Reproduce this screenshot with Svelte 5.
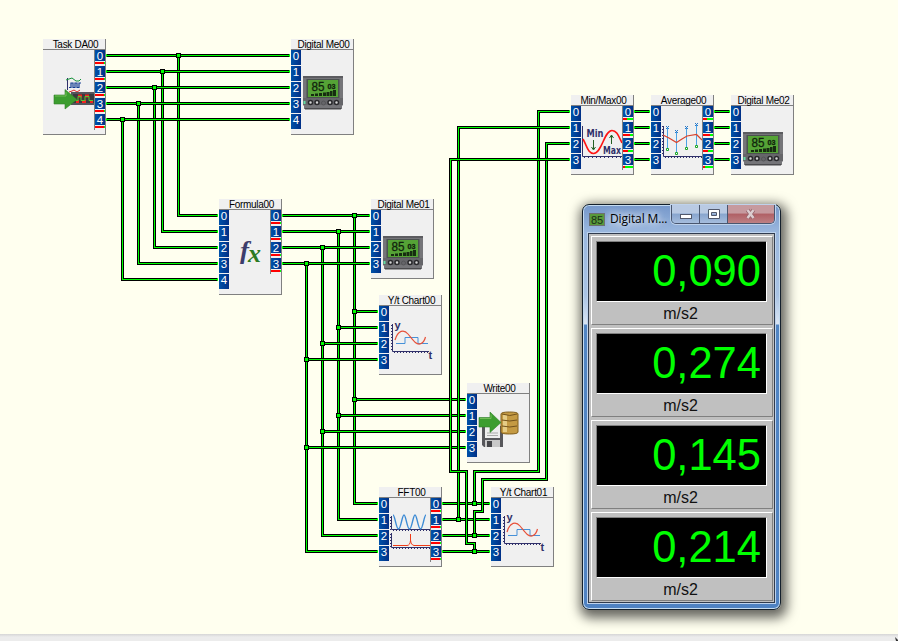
<script>
  const nodes = [
    { name: 'Task DA00', x: 43, y: 39, inputs: 0, outputs: 5, icon: 'task' },
    { name: 'Digital Me00', x: 291, y: 39, inputs: 5, outputs: 0, icon: 'meter' },
    { name: 'Formula00', x: 219, y: 199, inputs: 5, outputs: 4, icon: 'fx' },
    { name: 'Digital Me01', x: 371, y: 199, inputs: 4, outputs: 0, icon: 'meter' },
    { name: 'Y/t Chart00', x: 379, y: 295, inputs: 4, outputs: 0, icon: 'chart' },
    { name: 'Write00', x: 467, y: 383, inputs: 4, outputs: 0, icon: 'write' },
    { name: 'FFT00', x: 379, y: 487, inputs: 4, outputs: 4, icon: 'fft' },
    { name: 'Y/t Chart01', x: 491, y: 487, inputs: 4, outputs: 0, icon: 'chart' },
    { name: 'Min/Max00', x: 571, y: 95, inputs: 4, outputs: 4, icon: 'minmax', fill: [4, 7, 5, 2] },
    { name: 'Average00', x: 651, y: 95, inputs: 4, outputs: 4, icon: 'average', fill: [4, 7, 5, 2] },
    { name: 'Digital Me02', x: 731, y: 95, inputs: 4, outputs: 0, icon: 'meter' }
  ];

  const rows = (n) => Array.from({ length: n }, (_, i) => i);
  const wires = [];
  const joints = [];

  // Task outputs run to the first meter and branch down to the formula block
  [178.5, 162.5, 154.5, 138.5, 122.5].forEach((x, i) => {
    const y = 55.5 + 16 * i;
    wires.push(`M106 ${y}H290`, `M${x} ${y}V${215.5 + 16 * i}H218`);
    joints.push([x, y]);
  });

  // Formula outputs feed the meter, the chart, the writer and the FFT
  [354.5, 338.5, 322.5, 306.5].forEach((x, i) => {
    const d = 16 * i;
    wires.push(`M282 ${215.5 + d}H370`, `M${x} ${215.5 + d}V${503.5 + d}H378`);
    wires.push(`M${x} ${311.5 + d}H378`, `M${x} ${399.5 + d}H466`);
    joints.push([x, 215.5 + d], [x, 311.5 + d], [x, 399.5 + d]);
    wires.push(`M442 ${503.5 + d}H490`, `M634 ${111.5 + d}H650`, `M714 ${111.5 + d}H730`);
  });

  wires.push(
    'M474.5 503.5V471.5H538.5V111.5H570',
    'M458.5 519.5V127.5H570',
    'M474.5 535.5V511.5H482.5V479.5H546.5V143.5H570',
    'M474.5 551.5V543.5H466.5V471.5H450.5V159.5H570'
  );
  joints.push([474.5, 503.5], [458.5, 519.5], [474.5, 535.5], [474.5, 551.5]);

  // Green contact where a wire touches a port
  const tips = nodes.flatMap((n) => [
    ...rows(n.inputs).map((i) => [n.x - 2, n.y + 15 + 16 * i]),
    ...rows(n.outputs).map((i) => [n.x + 63, n.y + 15 + 16 * i])
  ]);

  const readings = ['0,090', '0,274', '0,145', '0,214'];
</script>

{#snippet picture(kind)}
  {#if kind === 'task'}
    <svg class="icon" viewBox="0 0 63 85">
      <path d="M24.500 28V40" stroke="#30306a" />
      <path d="M23 30l3-1 3-1 4 3 3 0 2-2" fill="none" stroke="#15913a" />
      <path d="M26 37.500h2v-4.500h2v4.500h2v-4.500h2v4.500h2v-4.500h2" fill="none" stroke="#123c91" stroke-width="1.200" />
      <path d="M26 42l3-1 2-1 3 2 3-2" fill="none" stroke="#e22a2a" />
      <rect x="28" y="42" width="23" height="13" fill="#55555c" />
      <rect x="30" y="44" width="21" height="9" fill="#3a3a40" />
      <path d="M33 51.500h3M39 51.500h4M47 51.500h3M35 46h4M42 46h4" fill="none" stroke="#f22420" stroke-width="3" />
      <path d="M31 50.500h4v-4h3v4h4v-4h4v4h4" fill="none" stroke="#58c431" />
      <path d="M11 45h11v-5.500l12 10-12 9.500v-5H11z" fill="#3c9d2f" stroke="#318228" stroke-width=".6" />
      <path d="M12 46h11v-4" fill="none" stroke="#72bd57" />
    </svg>
  {:else if kind === 'meter'}
    <svg class="icon" viewBox="0 0 63 85">
      <path d="M12 26h40v29l-1 1v3H13v-3l-1-1z" fill="#757579" />
      <path d="M12 26h40v2H12z" fill="#5c5c60" />
      <path d="M15.500 29h33v19h-33z" fill="#4c5250" />
      <rect x="17" y="30" width="30" height="17" fill="#55a336" />
      <text x="20.500" y="40.500" class="lcd" textLength="13" lengthAdjust="spacingAndGlyphs">85</text>
      <text x="36.500" y="38.500" class="lcd small" textLength="8" lengthAdjust="spacingAndGlyphs">03</text>
      <path d="M20 44h3v2h-3zM24 43.500h3V46h-3zM28 43h3v3h-3zM32 42.500h3V46h-3zM35.500 42h3v4h-3zM39 41h2.500v5H39zM42 40h3v6h-3z" fill="#162c10" />
      <path d="M12 48h40v7H12z" fill="#66666a" />
      <path d="M12.500 51h2v3h-2z" fill="#65dba5" />
      <g fill="#d5d5d5" stroke="#29292c" stroke-width="1.500">
        <circle cx="19.500" cy="52.500" r="2" /><circle cx="26" cy="52.500" r="2" />
        <circle cx="39" cy="52.500" r="2" /><circle cx="45.500" cy="52.500" r="2" />
      </g>
      <circle cx="32.500" cy="53" r="2" fill="none" stroke="#555558" />
      <path d="M14 58h36v1.500H14z" fill="#4a4a4d" />
    </svg>
  {:else if kind === 'fx'}
    <svg class="icon" viewBox="0 0 63 85">
      <text x="21" y="49" class="f" textLength="9" lengthAdjust="spacingAndGlyphs">f</text>
      <text x="29" y="51.500" class="x" textLength="13" lengthAdjust="spacingAndGlyphs">x</text>
    </svg>
  {:else if kind === 'chart'}
    <svg class="icon" viewBox="0 0 63 85">
      <path d="M13.500 18V45.500H50" fill="none" stroke="#30306a" />
      <path d="M12.500 19V45M15 46.500H50" fill="none" stroke="#30306a" stroke-dasharray="1 2" />
      <path d="M17 37.500h9v-6h13v6h10" fill="none" stroke="#4691d8" />
      <path d="M16 34C19 24 25 23 29 28C34 34 37 39 41 38Q45 37 46.500 31" fill="none" stroke="#e7523b" stroke-width="1.200" />
      <text x="15.500" y="22.500" class="axis">y</text>
      <text x="49.500" y="52.500" class="axis">t</text>
    </svg>
  {:else if kind === 'write'}
    <svg class="icon" viewBox="0 0 63 85">
      <path d="M15 32h21v21H17l-2-2z" fill="#57575b" />
      <path d="M18 32h15v12H18z" fill="#eeeeee" />
      <path d="M20 39h11M20 41.500h11" stroke="#aaaaaa" />
      <path d="M18 46h15v7H18z" fill="#c9c9c9" /><path d="M20 47h5v6h-5z" fill="#47474b" />
      <path d="M34 20q0-2 8.500-2t8.500 2v18q0 2-8.500 2t-8.500-2z" fill="#c49a43" stroke="#805e1c" />
      <path d="M37 21v17M39 21v17" stroke="#f0dd9c" stroke-width="1.500" />
      <path d="M35 20q8 3 15 0M35 26q8 2 15 0M35 32q8 2 15 0" fill="none" stroke="#73521c" />
      <path d="M12 23.500h11V18l11 10.500-11 10v-5.500H12z" fill="#3c9d2f" stroke="#318228" stroke-width=".6" />
      <path d="M13 24.500h11v-4" fill="none" stroke="#72bd57" />
    </svg>
  {:else if kind === 'fft'}
    <svg class="icon" viewBox="0 0 63 85">
      <path d="M12.500 18V31.500H52M12.500 35V49.500H52" fill="none" stroke="#30306a" />
      <path d="M11.500 19V32M14 32.500H52M11.500 36V50M14 50.500H52" fill="none" stroke="#30306a" stroke-dasharray="1 2" />
      <path d="M14 17C16 17 17 31 19.500 31S23 17 25 17 28 31 30.500 31 34 17 36 17 39 31 41.500 31 45 17 47 17" fill="none" stroke="#3c8bd5" stroke-width="1.400" />
      <path d="M14 47.500h14q3 0 3.500-5V36v6q.5 5 3.500 5.500h16" fill="none" stroke="#ef3b18" />
    </svg>
  {:else if kind === 'minmax'}
    <svg class="icon" viewBox="0 0 63 85">
      <path d="M11.500 20V50.500H51" fill="none" stroke="#30306a" />
      <path d="M13 51.500H51" stroke="#30306a" stroke-dasharray="1 3" />
      <path d="M12 33C16 40 17 47.500 22.500 47.500C31 47.500 33 24.500 41 24.500C46 24.500 48 31 51 37" fill="none" stroke="#ff1515" stroke-width="1.600" />
      <path d="M22.500 34v9M20.500 41l2 3 2-3M40.500 38v-9M38.500 32l2-3 2 3" fill="none" stroke="#246024" />
      <text x="15.500" y="31" class="mm" textLength="17" lengthAdjust="spacingAndGlyphs">Min</text>
      <text x="32" y="48" class="mm" textLength="18" lengthAdjust="spacingAndGlyphs">Max</text>
    </svg>
  {:else if kind === 'average'}
    <svg class="icon" viewBox="0 0 63 85">
      <path d="M12.500 20V50.500H51" fill="none" stroke="#30306a" />
      <path d="M11.500 20V50M14 51.500H51" stroke="#30306a" stroke-dasharray="1 2" />
      <path d="M16.500 22V42M25.500 26V46M35.500 22V41M45.500 19V39" stroke="#4ba2e5" />
      <path d="M15 20l3 3m0-3l-3 3M24 24l3 3m0-3l-3 3M34 20l3 3m0-3l-3 3M44 17l3 3m0-3l-3 3" stroke="#2878c9" />
      <path d="M12 29l6 3 7.500 4.500L31 33l5-3 9.500-1.500L51 34" fill="none" stroke="#d8432d" stroke-width="1.200" />
      <path d="M15.500 42.500h2v2h-2zM24.500 46.500h2v2h-2zM34.500 41.500h2v2h-2zM44.500 39.500h2v2h-2z" fill="#fff" stroke="#1ca629" />
    </svg>
  {/if}
{/snippet}

<main>
  <svg class="wires" viewBox="0 0 898 641">
    {#each wires as d}
      <path {d} class="casing" /><path {d} class="core" />
    {/each}
    {#each joints as [x, y]}
      <rect class="joint" x={x - 2} y={y - 2} width="4" height="4" />
    {/each}
    {#each tips as [x, y]}
      <rect class="tip" {x} {y} width="1" height="3" />
    {/each}
  </svg>

  {#each nodes as node}
    <section class="node" class:tall={node.inputs === 5 || node.outputs === 5} style:left="{node.x}px" style:top="{node.y}px">
      <header><span>{node.name}</span></header>
      <div class="body">
        {@render picture(node.icon)}
        <div class="ports">
          {#each rows(node.inputs) as n}<b class="port">{n}</b>{/each}
        </div>
        {#if node.outputs}
          <div class="ports out">
            {#each rows(node.outputs) as n}
              <b class="port">{n}</b><i class="level"><em style:width="{node.fill ? node.fill[n] : 9}px"></em></i>
            {/each}
          </div>
        {/if}
      </div>
    </section>
  {/each}

  <section class="window">
    <div class="titlebar">
      <span class="badge">85</span>
      <span class="title">Digital M...</span>
      <div class="controls">
        <span class="ctl"><svg width="14" height="12"><rect x="1.500" y="6.500" width="11" height="4" fill="#fff" stroke="#51586b" /></svg></span>
        <span class="ctl"><svg width="14" height="12"><path d="M1.500 1.500h11v9h-11zM4.500 4.500h5v3h-5z" fill="#fff" fill-rule="evenodd" stroke="#51586b" /></svg></span>
        <span class="ctl close"><svg width="12" height="12"><path d="M2.500 2l6 8M8.500 2l-6 8" stroke="#96656c" stroke-width="4" /><path d="M2.500 2l6 8M8.500 2l-6 8" stroke="#dccdd0" stroke-width="2.400" /></svg></span>
      </div>
    </div>
    <div class="client">
      {#each readings as value}
        <div class="panel">
          <div class="display">{value}</div>
          <div class="unit">m/s2</div>
        </div>
      {/each}
    </div>
  </section>

  <footer><svg width="4" height="5"><path d="M1 1l3 3v1H2z" fill="#333" /></svg></footer>
</main>

<style>
  :global(body) { margin: 0; }
  main { position: relative; width: 898px; height: 641px; overflow: hidden; background: #ffffef; font-family: "Liberation Sans", Arial, sans-serif; display: flex; align-items: flex-end; }
  .wires { position: absolute; inset: 0; width: 898px; height: 641px; shape-rendering: crispEdges; }
  .casing { fill: none; stroke: #000; stroke-width: 3; }
  .core { fill: none; stroke: #00ff00; stroke-width: 1; }
  .joint { fill: #00ff00; stroke: #000; stroke-width: 1; }
  .tip { fill: #00ff00; }

  .node { position: absolute; box-sizing: border-box; width: 63px; height: 80px; background: #f0f0f0; border-right: 1px solid #808080; border-bottom: 1px solid #808080; display: flex; flex-direction: column; }
  .node.tall { height: 96px; }
  header { flex: none; height: 10px; border-bottom: 1px solid #808080; display: flex; justify-content: center; font-size: 10px; line-height: 12px; letter-spacing: -0.3px; color: #000; white-space: nowrap; padding-left: 3px; }
  .body { position: relative; flex: 1; display: flex; justify-content: space-between; }
  .icon { position: absolute; left: 0; top: 0; width: 63px; height: 85px; overflow: visible; }
  .ports { position: relative; display: flex; flex-direction: column; }
  .port { width: 10px; height: 15px; margin-bottom: 1px; background: linear-gradient(90deg, #0052a9, #002f86); color: #fff; font-size: 11.500px; line-height: 13px; font-weight: 400; text-align: center; }
  .out { border-left: 1px solid #808080; background: #f0f0f0; height: fit-content; }
  .out .port { height: 11px; line-height: 13px; margin: 0; }
  .level { height: 2px; width: 10px; margin: 1px 0 2px; background: #00ff00; }
  .level em { display: block; height: 2px; background: #f00; }

  .lcd { font: 400 12px "Liberation Sans", sans-serif; fill: #10240c; stroke: #10240c; stroke-width: 0.3px; }
  .lcd.small { font-size: 8px; font-weight: 700; }
  .f { font: italic 700 25px "Liberation Serif", serif; fill: #3d3d6b; }
  .x { font: italic 700 25px "Liberation Serif", serif; fill: #2d7a22; }
  .axis { font: 700 11px "Liberation Sans", sans-serif; fill: #30306a; }
  .mm { font: 700 10px "DejaVu Sans", sans-serif; fill: #30306a; }

  .window { position: absolute; left: 582px; top: 204px; width: 199px; height: 406px; box-sizing: border-box; border: 1px solid #14202c; border-radius: 7px; background: linear-gradient(#7597ca 0, #9ab7de 27px, #a9c3e4 90px, #dae5f3 119px, #5185c3 120px, #4f82c2 100%); box-shadow: inset 0 0 0 1px #c4dbf0, 2px 4px 12px 4px rgba(0, 0, 0, 0.6); padding: 0 5px 6px; display: flex; flex-direction: column; }
  .titlebar { height: 28px; display: flex; align-items: flex-start; }
  .badge { margin: 8px 0 0 1px; width: 14px; height: 11px; border: 1px solid #6b6e70; background: #58993a; color: #182e16; font-size: 11px; line-height: 12px; text-align: center; }
  .title { margin: 6px 0 0 5px; font: 12px/16px "Open Sans", "Noto Sans", sans-serif; letter-spacing: -0.1px; color: #000; white-space: nowrap; text-shadow: 0 0 7px #fff, 0 0 10px #fff; width: 61px; }
  .controls { display: flex; height: 18px; border: 1px solid #49566f; border-top: 0; border-radius: 0 0 5px 5px; overflow: hidden; box-shadow: 0 0 0 1px #bfd2eb; }
  .ctl { width: 27px; display: flex; align-items: center; justify-content: center; background: linear-gradient(#b9cae3 45%, #88a5ce 50%, #a6bddd); border-right: 1px solid #49566f; }
  .close { width: 46px; border: 0; background: linear-gradient(#c69a9f 45%, #b06065 50%, #bd8084); }
  .client { flex: 1; box-sizing: border-box; border: 1px solid #303b4d; box-shadow: 0 0 0 1px #bed3ed; background: #c0c0c0; padding: 2px 1px 0 2px; display: flex; flex-direction: column; gap: 3px; }
  .panel { box-sizing: border-box; height: 89px; border: 1px solid #fff; border-right-color: #808080; border-bottom-color: #808080; padding: 4px; flex: none; }
  .display { box-sizing: border-box; width: 171px; height: 61px; border: 1px solid #808080; border-right-color: #fff; border-bottom-color: #fff; background: #000; color: #0f0; font-size: 43.500px; line-height: 59px; text-align: right; padding-right: 5px; }
  .unit { font-size: 16px; line-height: 20px; height: 20px; text-align: center; color: #111; padding: 2px 3px 0 0; }
  footer { width: 100%; height: 7px; background: linear-gradient(#d6d6d6, #ececec 3px); display: flex; justify-content: flex-end; align-items: flex-end; }
</style>
